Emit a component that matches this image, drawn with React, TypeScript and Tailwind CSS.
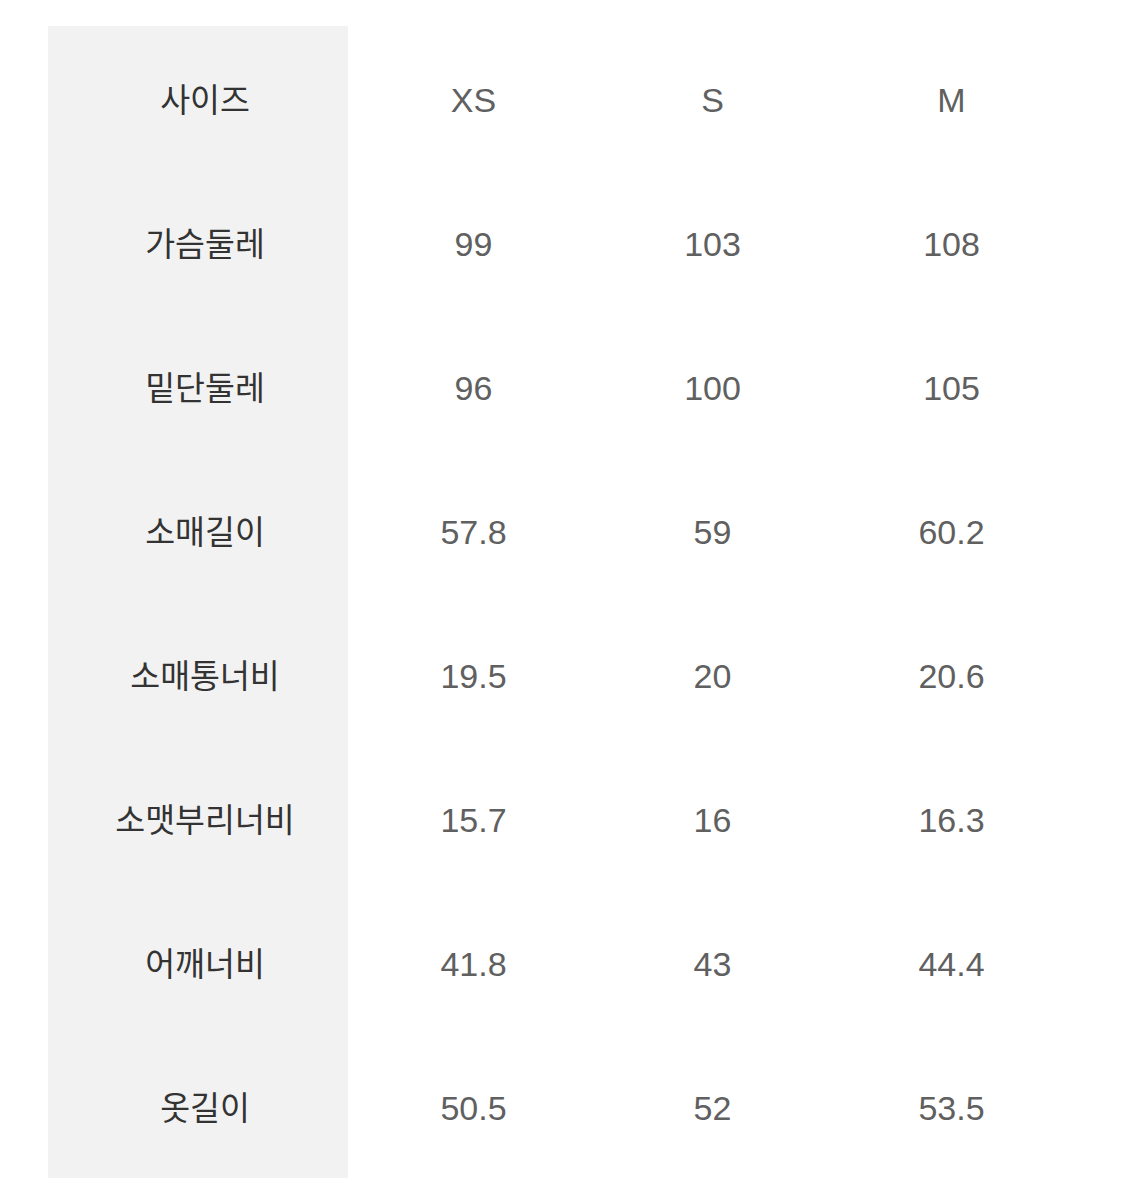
import React from 'react';

const rows: [string, string, string, string][] = [
  ['사이즈', 'XS', 'S', 'M'],
  ['가슴둘레', '99', '103', '108'],
  ['밑단둘레', '96', '100', '105'],
  ['소매길이', '57.8', '59', '60.2'],
  ['소매통너비', '19.5', '20', '20.6'],
  ['소맷부리너비', '15.7', '16', '16.3'],
  ['어깨너비', '41.8', '43', '44.4'],
  ['옷길이', '50.5', '52', '53.5'],
];

const App: React.FC = () => {
  return (
    <div className="min-h-[1200px] bg-white pt-[26px] pl-[48px]">
      <div className="flex">
        {/* label column */}
        <div className="w-[300px] bg-[#f2f2f2]">
          {rows.map((r) => (
            <div
              key={r[0]}
              className="h-[144px] flex items-center justify-center pl-[14px] text-[32.5px] text-[#333333] font-['Noto_Sans_CJK_KR',sans-serif]"
            >
              {r[0]}
            </div>
          ))}
        </div>

        {/* values */}
        <div className="ml-[6px]">
          {rows.map((r) => (
            <div key={r[0]} className="h-[144px] flex items-center pt-[4px]">
              {r.slice(1).map((v, i) => (
                <div
                  key={i}
                  className="w-[239px] text-center text-[34px] text-[#606060] font-['Liberation_Sans',Arial,sans-serif]"
                >
                  {v}
                </div>
              ))}
            </div>
          ))}
        </div>
      </div>
    </div>
  );
};

export default App;
